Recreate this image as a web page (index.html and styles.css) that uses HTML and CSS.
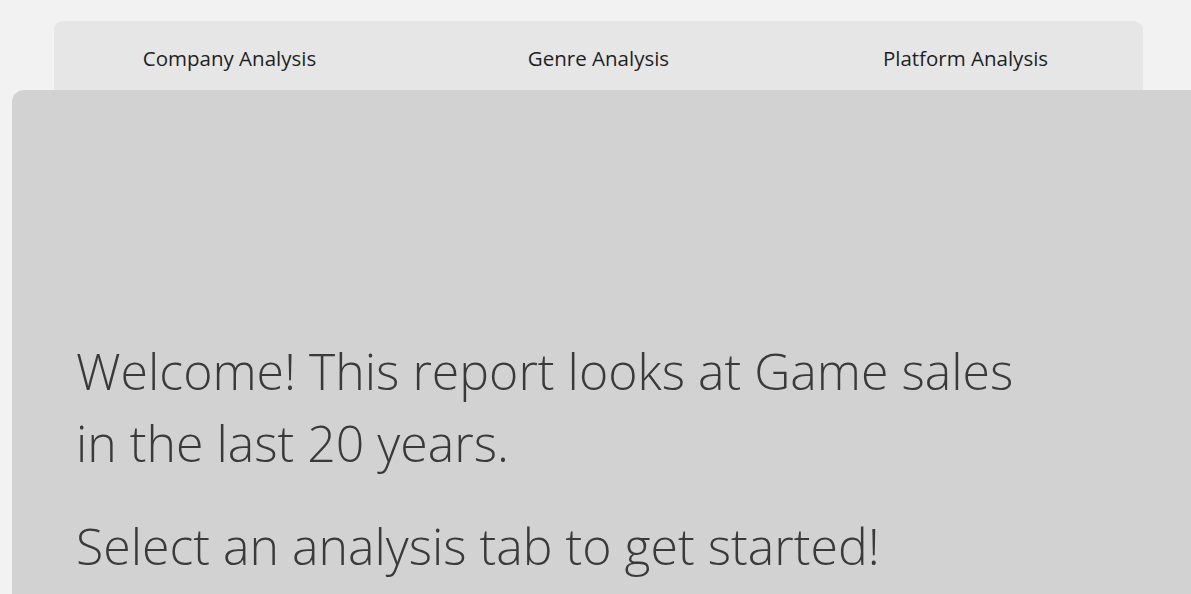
FILE: index.html
```html
<!DOCTYPE html>
<html>
<head>
<meta charset="utf-8">
<link rel="stylesheet" href="styles.css">
</head>
<body>
<div class="page">
  <nav class="tabs">
    <div class="tab">Company Analysis</div>
    <div class="tab">Genre Analysis</div>
    <div class="tab">Platform Analysis</div>
  </nav>
  <main class="panel">
    <div class="welcome">
      <p class="line">Welcome! This report looks at Game sales in the last 20 years.</p>
      <p class="line">Select an analysis tab to get started!</p>
    </div>
  </main>
</div>
</body>
</html>
```

FILE: styles.css
```css
html, body {
  margin: 0;
  padding: 0;
  height: 100%;
  overflow: hidden;
  background: #f2f2f2;
}
.page {
  display: flex;
  flex-direction: column;
  height: 100%;
  padding-top: 21px;
  box-sizing: border-box;
}
.tabs {
  margin-left: 54px;
  width: 1089px;
  height: 69px;
  background: #e6e6e6;
  border-radius: 9px 9px 0 0;
  display: grid;
  grid-template-columns: 1fr 1fr 1fr;
  flex-shrink: 0;
}
.tab {
  display: flex;
  align-items: center;
  justify-content: center;
  padding-top: 5px;
  font-family: "Open Sans", "Noto Sans", sans-serif;
  font-size: 20.5px;
  color: #1f1f1f;
}
.tab:first-child { padding-right: 12px; }
.tab:last-child { padding-left: 8px; }
.panel {
  flex: 1;
  margin-left: 12px;
  background: #d2d2d2;
  border-top-left-radius: 12px;
  padding: 245px 0 0 64px;
}
.welcome {
  width: 960px;
  font-family: "Open Sans", "Noto Sans", sans-serif;
  font-weight: 300;
  font-size: 50px;
  line-height: 72px;
  color: #3a3a3a;
}
.line {
  margin: 0 0 31px 0;
}
```
